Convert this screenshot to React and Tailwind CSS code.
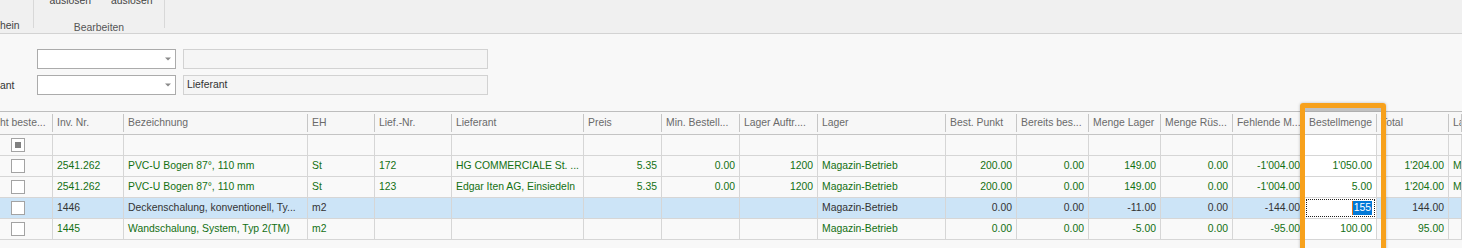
import React from "react";

const cols = [
  { w: 53, title: "ht beste..." },
  { w: 71, title: "Inv. Nr." },
  { w: 184, title: "Bezeichnung" },
  { w: 67, title: "EH" },
  { w: 77, title: "Lief.-Nr." },
  { w: 132, title: "Lieferant" },
  { w: 78, title: "Preis", right: true },
  { w: 78, title: "Min. Bestell...", right: true },
  { w: 78, title: "Lager Auftr....", right: true },
  { w: 128, title: "Lager" },
  { w: 71, title: "Best. Punkt", right: true },
  { w: 72, title: "Bereits bes...", right: true },
  { w: 72, title: "Menge Lager", right: true },
  { w: 72, title: "Menge Rüs...", right: true },
  { w: 72, title: "Fehlende M...", right: true },
  { w: 72, title: "Bestellmenge", right: true, white: true },
  { w: 72, title: "Total", right: true },
  { w: 13, title: "La" },
];

const rows = [
  { cells: ["", "2541.262", "PVC-U Bogen 87°, 110 mm", "St", "172", "HG COMMERCIALE St. ...", "5.35", "0.00", "1200", "Magazin-Betrieb", "200.00", "0.00", "149.00", "0.00", "-1'004.00", "1'050.00", "1'204.00", "M"] },
  { cells: ["", "2541.262", "PVC-U Bogen 87°, 110 mm", "St", "123", "Edgar Iten AG, Einsiedeln", "5.35", "0.00", "1200", "Magazin-Betrieb", "200.00", "0.00", "149.00", "0.00", "-1'004.00", "5.00", "1'204.00", "M"] },
  { selected: true, cells: ["", "1446", "Deckenschalung, konventionell, Ty...", "m2", "", "", "", "", "", "Magazin-Betrieb", "0.00", "0.00", "-11.00", "0.00", "-144.00", "155", "144.00", ""] },
  { cells: ["", "1445", "Wandschalung, System, Typ 2(TM)", "m2", "", "", "", "", "", "Magazin-Betrieb", "0.00", "0.00", "-5.00", "0.00", "-95.00", "100.00", "95.00", ""] },
];

const Arrow = () => (
  <svg width="6" height="4" viewBox="0 0 6 4" className="mr-[4px]">
    <path d="M0 0.5 L6 0.5 L3 3.5 Z" fill="#8a8a8a" />
  </svg>
);

const Combo = () => (
  <div className="w-[139px] h-[20px] bg-white border border-[#ababab] flex items-center justify-end">
    <Arrow />
  </div>
);

const Check = ({ filter }) => (
  <div className="w-[14px] h-[14px] bg-white border border-[#a3a3a3] flex items-center justify-center">
    {filter && <div className="w-[6px] h-[6px] bg-[#808080]" />}
  </div>
);

const App = () => {
  return (
    <div className="relative w-[1462px] h-[248px] overflow-hidden bg-[#f8f8f8] text-[10.4px] text-[#333] font-['Liberation_Sans',Arial,sans-serif]">
      {/* Ribbon */}
      <div className="h-[34px] bg-[#f0f0f0] border-b border-[#d3d3d3] flex overflow-hidden">
        <div className="w-[33px] flex flex-col justify-end pb-[1px]">
          <span className="leading-[13px] text-[#444]">hein</span>
        </div>
        <div className="w-px h-[28px] bg-[#d8d8d8]" />
        <div className="w-[130px] flex flex-col items-center">
          <div className="flex gap-[20px] mt-[-6px] pl-[4px] text-[#444] leading-[13px]">
            <span>auslösen</span>
            <span>auslösen</span>
          </div>
          <span className="mt-[14px] leading-[13px] text-[#555]">Bearbeiten</span>
        </div>
        <div className="w-px h-[28px] bg-[#d8d8d8]" />
      </div>

      {/* Form panel */}
      <div className="h-[77px] pt-[15px] flex flex-col gap-[6px]">
        <div className="flex items-center h-[20px]">
          <div className="w-[37px]" />
          <Combo />
          <div className="ml-[7px] w-[305px] h-[20px] bg-[#f5f5f5] border border-[#d2d2d2]" />
        </div>
        <div className="flex items-center h-[20px]">
          <div className="w-[37px] leading-[13px]">ant</div>
          <Combo />
          <div className="ml-[7px] w-[305px] h-[20px] bg-[#f5f5f5] border border-[#d2d2d2] flex items-center pl-[3px]">
            Lieferant
          </div>
        </div>
      </div>

      {/* Grid */}
      <div className="border-t border-[#bdbdbd]">
        <div className="flex h-[23px] border-b border-[#c4c4c4] bg-[#f7f7f7]">
          {cols.map((c, i) => (
            <div
              key={i}
              style={{ width: c.w }}
              className="shrink-0 h-full flex items-center py-[2px]"
            >
              <div className="flex-1 h-full flex items-center px-[4px] overflow-hidden whitespace-nowrap text-[#6a6a6a] border-r border-[#c6c6c6]">
                {i === 0 ? <span className="ml-[-4px]">{c.title}</span> : c.title}
              </div>
            </div>
          ))}
        </div>

        {/* filter row */}
        <div className="flex h-[21px] border-b border-[#d6d6d6] bg-[#f9f9f9]">
          {cols.map((c, i) => (
            <div
              key={i}
              style={{ width: c.w }}
              className={`shrink-0 h-full border-r border-[#d6d6d6] flex items-center ${c.white ? "bg-white" : ""} ${i === 0 ? "pl-[11px]" : ""}`}
            >
              {i === 0 && <Check filter />}
            </div>
          ))}
        </div>

        {rows.map((r, ri) => (
          <div
            key={ri}
            className={`flex h-[21px] border-b border-[#d6d6d6] ${r.selected ? "bg-[#cce4f7] text-[#333]" : "bg-[#f9f9f9] text-[#137013]"}`}
          >
            {cols.map((c, i) => {
              const v = r.cells[i];
              if (c.white && r.selected) {
                return (
                  <div key={i} style={{ width: c.w }} className="shrink-0 h-full border-r border-[#d6d6d6] bg-white p-[1px]">
                    <div className="h-full border border-dotted border-[#222] flex items-center justify-end pr-[2px]">
                      <span className="w-px h-[14px] bg-[#e8731a]" />
                      <span className="bg-[#0078d7] text-white leading-[14px] px-[1px]">{v}</span>
                    </div>
                  </div>
                );
              }
              return (
                <div
                  key={i}
                  style={{ width: c.w }}
                  className={`shrink-0 h-full border-r border-[#d6d6d6] flex items-center overflow-hidden whitespace-nowrap ${c.right ? "justify-end pr-[4px]" : "pl-[4px]"} ${c.white ? "bg-white" : ""} ${i === 0 ? "pl-[11px]" : ""}`}
                >
                  {i === 0 ? <Check /> : v}
                </div>
              );
            })}
          </div>
        ))}
      </div>

      {/* highlight frame */}
      <div className="absolute left-[1300px] top-[103px] w-[86px] h-[160px] border-[5px] border-[#f7a11c] rounded-[3px] shadow-[0_0_3px_rgba(0,0,0,0.25)]">
        <div className="h-[4px] bg-[#a9a9a9]/70" />
      </div>
    </div>
  );
};

export default App;
